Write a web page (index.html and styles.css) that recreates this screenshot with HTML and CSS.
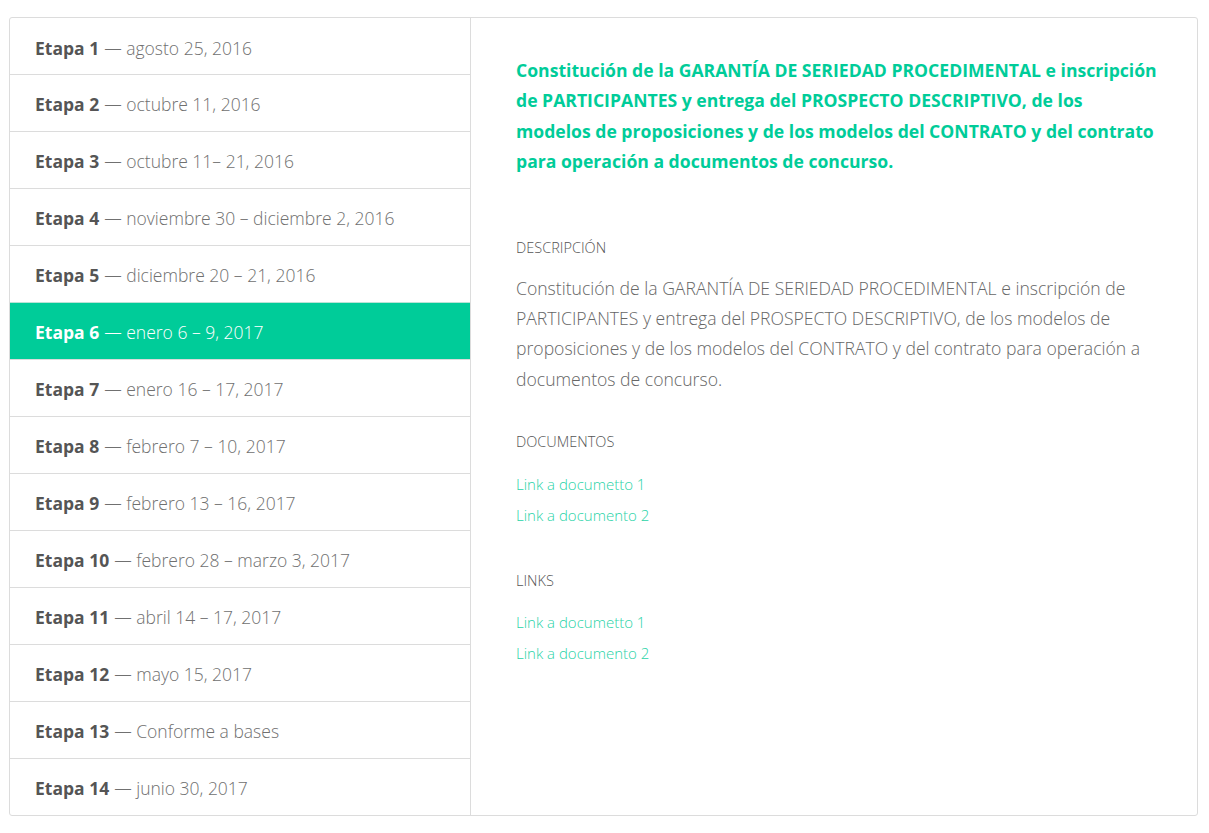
FILE: index.html
```html
<!DOCTYPE html>
<html lang="es">
<head>
<meta charset="utf-8">
<title>Etapas</title>
<link rel="stylesheet" href="styles.css">
</head>
<body>
<div class="page">
  <div class="panel">
    <ul class="stages">
      <li class="stage"><b>Etapa 1</b> — agosto 25, 2016</li>
      <li class="stage"><b>Etapa 2</b> — octubre 11, 2016</li>
      <li class="stage"><b>Etapa 3</b> — octubre 11– 21, 2016</li>
      <li class="stage"><b>Etapa 4</b> — noviembre 30 – diciembre 2, 2016</li>
      <li class="stage"><b>Etapa 5</b> — diciembre 20 – 21, 2016</li>
      <li class="stage active"><b>Etapa 6</b> — enero 6 – 9, 2017</li>
      <li class="stage"><b>Etapa 7</b> — enero 16 – 17, 2017</li>
      <li class="stage"><b>Etapa 8</b> — febrero 7 – 10, 2017</li>
      <li class="stage"><b>Etapa 9</b> — febrero 13 – 16, 2017</li>
      <li class="stage"><b>Etapa 10</b> — febrero 28 – marzo 3, 2017</li>
      <li class="stage"><b>Etapa 11</b> — abril 14 – 17, 2017</li>
      <li class="stage"><b>Etapa 12</b> — mayo 15, 2017</li>
      <li class="stage"><b>Etapa 13</b> — Conforme a bases</li>
      <li class="stage"><b>Etapa 14</b> — junio 30, 2017</li>
    </ul>
    <div class="detail">
      <h2 class="title">Constitución de la GARANTÍA DE SERIEDAD PROCEDIMENTAL e inscripción de PARTICIPANTES y entrega del PROSPECTO DESCRIPTIVO, de los modelos de proposiciones y de los modelos del CONTRATO y del contrato para operación a documentos de concurso.</h2>
      <h3 class="label label-desc">Descripción</h3>
      <p class="desc">Constitución de la GARANTÍA DE SERIEDAD PROCEDIMENTAL e inscripción de PARTICIPANTES y entrega del PROSPECTO DESCRIPTIVO, de los modelos de proposiciones y de los modelos del CONTRATO y del contrato para operación a documentos de concurso.</p>
      <h3 class="label label-docs">Documentos</h3>
      <ul class="links links-docs">
        <li><a href="#">Link a documetto 1</a></li>
        <li><a href="#">Link a documento 2</a></li>
      </ul>
      <h3 class="label label-links">Links</h3>
      <ul class="links links-ext">
        <li><a href="#">Link a documetto 1</a></li>
        <li><a href="#">Link a documento 2</a></li>
      </ul>
    </div>
  </div>
</div>
</body>
</html>
```

FILE: styles.css
```css
html, body {
  margin: 0;
  padding: 0;
  background: #fff;
}
body {
  font-family: "Open Sans", "Liberation Sans", sans-serif;
  color: #666;
}
.page {
  padding: 17px 11px 0 9px;
}
.panel {
  display: grid;
  grid-template-columns: 461px 1fr;
  border: 1px solid #dcdcdc;
  border-radius: 3px;
  overflow: hidden;
}
.stages {
  list-style: none;
  margin: 0;
  padding: 0;
  border-right: 1px solid #dcdcdc;
}
.stage {
  box-sizing: border-box;
  height: 57px;
  display: flex;
  align-items: center;
  padding: 2px 0 0 25px;
  font-size: 17.5px;
  font-weight: 300;
  color: #707070;
  border-top: 1px solid #dcdcdc;
  white-space: nowrap;
}
.stage:first-child {
  border-top: none;
  height: 56px;
  padding-top: 4px;
}
.stage b {
  font-weight: 700;
  color: #555;
  margin-right: 5px;
}
.stage.active {
  background: #00cc99;
  color: #fff;
  border-top-color: #b9e3d6;
}
.stage.active b {
  color: #fff;
}
.detail {
  padding: 37px 36px 0 45px;
}
.title {
  margin: 0;
  font-size: 17.6px;
  font-weight: 700;
  line-height: 30.4px;
  color: #00cc99;
}
.label {
  margin: 0;
  font-size: 14.5px;
  font-weight: 300;
  text-transform: uppercase;
  color: #555;
  line-height: 20px;
}
.label-desc {
  margin-top: 61px;
}
.desc {
  margin: 15px 0 0;
  font-size: 17.6px;
  font-weight: 300;
  line-height: 30.4px;
  color: #666;
  max-width: 640px;
}
.label-docs {
  margin-top: 38px;
}
.label-links {
  margin-top: 40px;
}
.links {
  list-style: none;
  margin: 17px 0 0;
  padding: 0;
}
.links-ext {
  margin-top: 16px;
}
.links li {
  font-size: 15px;
  line-height: 31px;
  font-weight: 300;
}
.links a {
  color: #2ad3a7;
  text-decoration: none;
}
```
